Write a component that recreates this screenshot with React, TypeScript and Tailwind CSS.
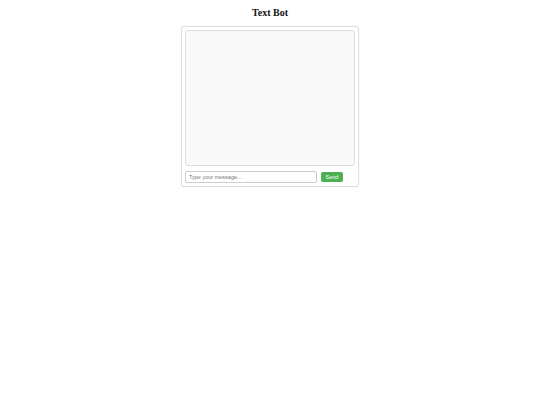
export default function App() {
  return (
    <div className="w-[540px] h-[405px] bg-white flex flex-col items-center">
      <h1
        className="mt-[8px] text-[10px] leading-[10px] font-bold text-[#111111]"
        style={{ fontFamily: '"Liberation Serif", serif' }}
      >
        Text Bot
      </h1>
      <div className="mt-[8px] w-[178px] h-[161px] border border-[#dddddd] rounded-[3px] p-[3px] bg-white shadow-[0_0_2px_rgba(0,0,0,0.06)] flex flex-col">
        <div className="h-[136px] bg-[#f9f9f9] border border-[#dddddd] rounded-[3px]" />
        <div
          className="mt-[5px] flex items-center"
          style={{ fontFamily: '"Liberation Sans", Arial, sans-serif' }}
        >
          <input
            className="w-[132px] h-[12px] border border-[#cccccc] rounded-[2px] px-[3px] text-[5.5px] bg-white outline-none placeholder:text-[#777777]"
            placeholder="Type your message..."
          />
          <button className="ml-[4px] w-[22px] h-[10px] bg-[#4caf50] text-white text-[5.5px] leading-[10px] rounded-[2px]">
            Send
          </button>
        </div>
      </div>
    </div>
  );
}
